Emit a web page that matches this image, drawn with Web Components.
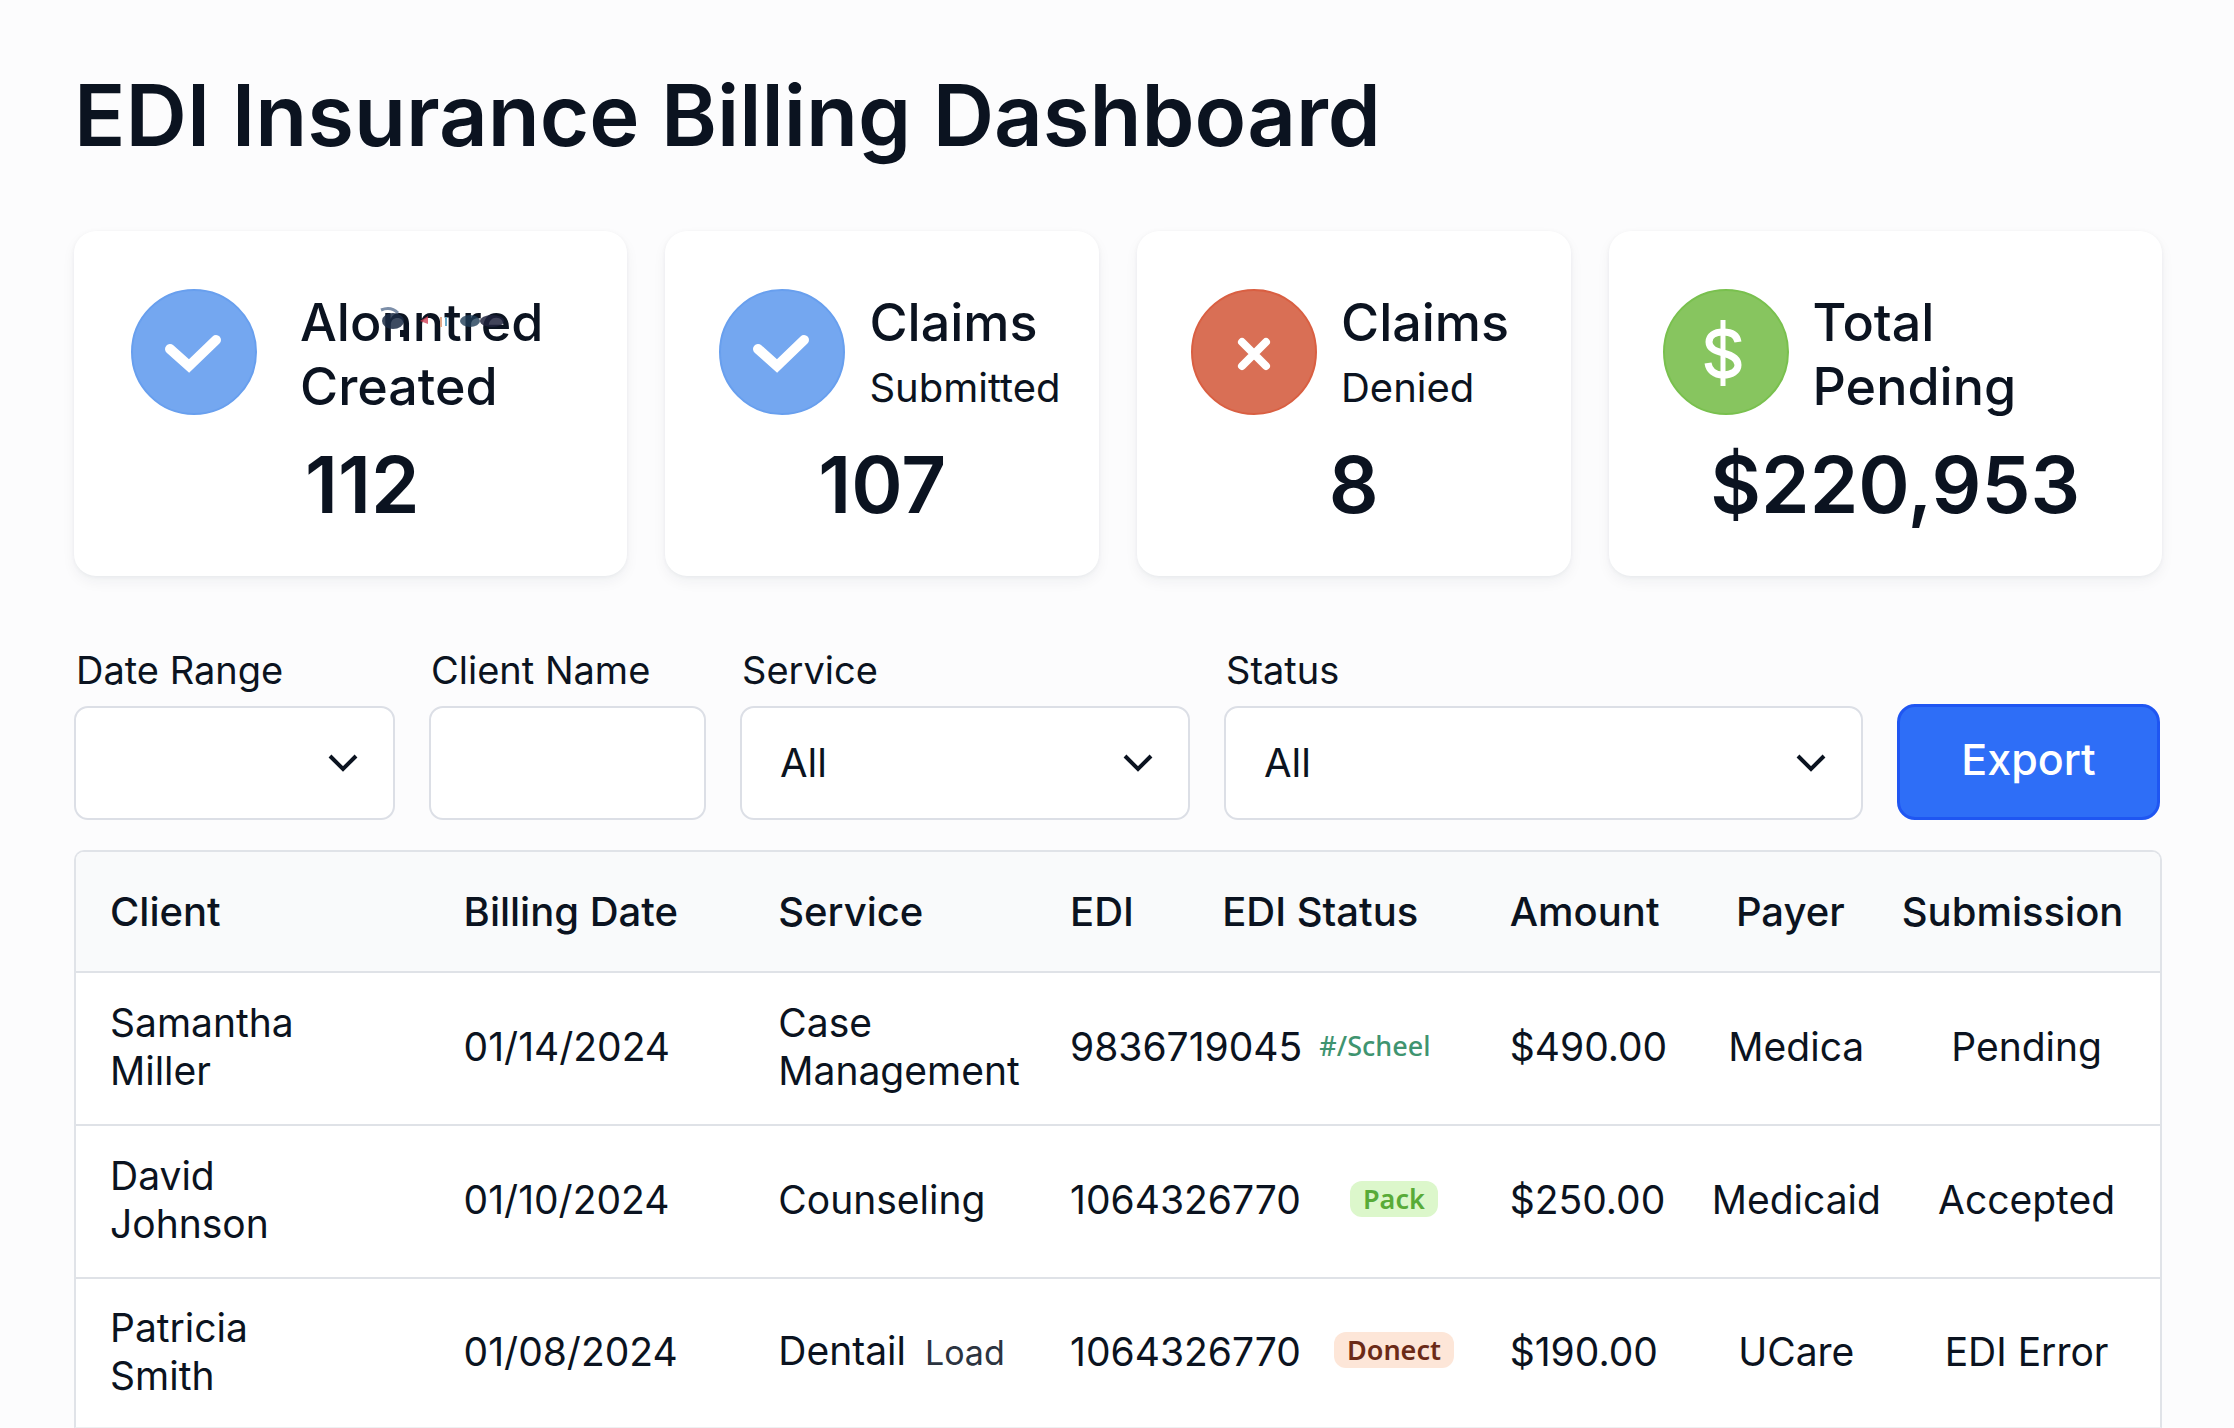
<!DOCTYPE html>
<html lang="en">
<head>
<meta charset="utf-8">
<title>EDI Insurance Billing Dashboard</title>
<style>
  body { margin: 0; background: #fcfcfd; color: #0b1320; font-family: Inter, "Liberation Sans", sans-serif; }
</style>
</head>
<body>
<billing-dashboard>
  <span slot="title">EDI Insurance Billing Dashboard</span>
  <stat-card slot="stats" icon="check" tone="blue" value="112" wide smudge><span>Alonntred</span><span>Created</span></stat-card>
  <stat-card slot="stats" icon="check" tone="blue" value="107"><span>Claims</span><span slot="sub">Submitted</span></stat-card>
  <stat-card slot="stats" icon="cross" tone="red" value="8"><span>Claims</span><span slot="sub">Denied</span></stat-card>
  <stat-card slot="stats" icon="dollar" tone="green" value="$220,953" shifted><span>Total</span><span>Pending</span></stat-card>
  <filter-field slot="filters" label="Date Range" type="select"></filter-field>
  <filter-field slot="filters" label="Client Name" type="text"></filter-field>
  <filter-field slot="filters" label="Service" type="select" value="All"></filter-field>
  <filter-field slot="filters" label="Status" type="select" value="All"></filter-field>
  <export-button slot="filters">Export</export-button>
  <claims-table></claims-table>
</billing-dashboard>
<script>
class Base extends HTMLElement {
  connectedCallback() {
    if (!this.shadowRoot) this.attachShadow({ mode: 'open' }).innerHTML = this.render();
  }
}

customElements.define('billing-dashboard', class extends Base {
  render() {
    return `<style>
      :host { display: block; padding: 62px 72px 0 74px; }
      h1 { margin: 0 0 61px; font-size: 85px; line-height: 108px; font-weight: 600; white-space: nowrap; }
      .stats { display: grid; grid-template-columns: 554fr 434fr 434fr 554fr; gap: 38px; margin-bottom: 70px; }
      .filters { display: grid; grid-template-columns: 321fr 277fr 450fr 639fr 263fr; gap: 34px; align-items: end; margin: 0 2px 30px 0; }
    </style>
    <h1><slot name="title"></slot></h1>
    <section class="stats"><slot name="stats"></slot></section>
    <form class="filters"><slot name="filters"></slot></form>
    <slot></slot>`;
  }
});

const ICONS = {
  check: '<path d="M39 60 L58 77 L85 51" fill="none" stroke="#fff" stroke-width="10" stroke-linecap="round"/>',
  cross: '<path d="M51 53 L75 77 M75 53 L51 77" fill="none" stroke="#fff" stroke-width="8" stroke-linecap="round"/>',
  dollar: '<path d="M75 53 C74 46 68 43 60 43 C51 43 46 47 46 53 C46 60 53 62 60 64 C68 66 75 69 75 76 C75 82 69 86 60 86 C51 86 46 81 45 74" fill="none" stroke="#fff" stroke-width="7"/><path d="M60 31 V97" stroke="#fff" stroke-width="5"/>'
};
const TONES = { blue: ['#74a7f0', '#689fee'], red: ['#d96f55', '#d95f42'], green: ['#87c55f', '#79c04e'] };

customElements.define('stat-card', class extends Base {
  render() {
    const [fill, ring] = TONES[this.getAttribute('tone')];
    return `<style>
      :host { display: block; box-sizing: border-box; min-width: 0; padding: 58px 0 43px 54px; background: #fff; border-radius: 22px;
        box-shadow: 0 6px 14px rgba(20, 30, 50, .05), 0 1px 4px rgba(20, 30, 50, .05); }
      :host([wide]) { padding-left: 57px; }
      .head { display: flex; gap: 24px; min-height: 132px; margin-bottom: 16px; }
      :host([wide]) .head { gap: 43px; }
      .icon { flex: none; width: 126px; height: 126px; }
      .text { position: relative; padding-top: 2px; font-size: 52px; line-height: 64px; font-weight: 500; white-space: nowrap; }
      ::slotted(span) { display: block; }
      .sub { font-size: 40px; line-height: 66px; font-weight: 400; }
      .value { margin-left: -54px; text-align: center; font-size: 78px; line-height: 96px; font-weight: 600; }
      :host([wide]) .value, :host([shifted]) .value { margin-left: -34px; }
      .smudge { position: absolute; left: 79px; top: 18px; width: 130px; height: 38px; }
    </style>
    <div class="head">
      <svg class="icon" viewBox="0 0 126 126" aria-hidden="true"><circle cx="63" cy="63" r="62" fill="${fill}" stroke="${ring}" stroke-width="2"/>${ICONS[this.getAttribute('icon')]}</svg>
      <div class="text"><slot></slot><div class="sub"><slot name="sub"></slot></div>
      ${this.hasAttribute('smudge') ? `<svg class="smudge" viewBox="0 0 130 38" aria-hidden="true">
        <path d="M2 3 Q12 -1 19 6" fill="none" stroke="#7c8ea8" stroke-width="3"/>
        <ellipse cx="14" cy="14" rx="11" ry="8" fill="#1b2c45" opacity=".85"/>
        <rect x="21" y="23" width="7" height="7" fill="#0b1320"/>
        <path d="M41 14 l8 -5 v8 z" fill="#cf4055" opacity=".8"/>
        <path d="M62 10 v10" stroke="#e2a98a" stroke-width="2"/><path d="M67 10 v9" stroke="#69aac9" stroke-width="2"/>
        <ellipse cx="91" cy="14" rx="10" ry="6" fill="#1f3d58" opacity=".8"/>
        <ellipse cx="113" cy="14" rx="12" ry="6" fill="#20233d" opacity=".85"/>
      </svg>` : ''}</div>
    </div>
    <div class="value">${this.getAttribute('value')}</div>`;
  }
});

customElements.define('filter-field', class extends Base {
  render() {
    const value = this.getAttribute('value') || '';
    const control = this.getAttribute('type') === 'select'
      ? `<select id="control"><option>${value}</option></select>
         <svg viewBox="0 0 30 18" aria-hidden="true"><path d="M2 2 L15 15 L28 2" fill="none" stroke="#0b1320" stroke-width="4"/></svg>`
      : `<input id="control" type="text">`;
    return `<style>
      :host { display: block; min-width: 0; }
      label { display: block; margin: 0 0 12px 2px; font-size: 38px; line-height: 48px; white-space: nowrap; }
      .box { display: grid; align-items: center; }
      select, input { grid-area: 1 / 1; appearance: none; box-sizing: border-box; width: 100%; height: 114px; margin: 0; padding: 0 38px;
        border: 2px solid #dcdfe6; border-radius: 14px; background: #fff; color: inherit; font: 400 40px/48px Inter, "Liberation Sans", sans-serif; }
      svg { grid-area: 1 / 1; justify-self: end; width: 30px; height: 18px; margin-right: 37px; pointer-events: none; }
    </style>
    <label for="control">${this.getAttribute('label')}</label>
    <div class="box">${control}</div>`;
  }
});

customElements.define('export-button', class extends Base {
  render() {
    return `<style>
      :host { display: block; min-width: 0; }
      button { display: block; box-sizing: border-box; width: 100%; height: 116px; padding: 0 0 6px; border: 3px solid #1f56f2; border-radius: 18px;
        background: #2e6ef7; color: #fff; font: 500 43px/50px Inter, "Liberation Sans", sans-serif; }
    </style><button type="button"><slot></slot></button>`;
  }
});

customElements.define('status-badge', class extends Base {
  render() {
    return `<style>
      :host { display: inline-block; padding: 0 13px; border-radius: 12px; font: 600 27px/36px "Noto Sans", "Open Sans", sans-serif; }
      :host([tone="green"]) { background: #dcf7cb; color: #58ab38; }
      :host([tone="orange"]) { background: #fde6d8; color: #6b2a17; }
      :host([tone="plain"]) { padding: 0 38px 0 0; color: #3f9470; font-weight: 500; }
    </style><slot></slot>`;
  }
});

const CLAIMS = [
  ['Samantha<br>Miller', '01/14/2024', 'Case<br>Management', '9836719045', 'plain', '#/Scheel', '$490.00', 'Medica', 'Pending'],
  ['David<br>Johnson', '01/10/2024', 'Counseling', '1064326770', 'green', 'Pack', '$250.00', 'Medicaid', 'Accepted'],
  ['Patricia<br>Smith', '01/08/2024', 'Dentail <small>Load</small>', '1064326770', 'orange', 'Donect', '$190.00', 'UCare', 'EDI Error']
];

customElements.define('claims-table', class extends Base {
  render() {
    const rows = CLAIMS.map(([client, date, service, edi, tone, badge, amount, payer, submission]) => `<tr>
      <td>${client}</td><td>${date}</td><td>${service}</td><td>${edi}</td>
      <td class="status"><status-badge tone="${tone}">${badge}</status-badge></td>
      <td>${amount}</td><td class="mid">${payer}</td><td class="mid">${submission}</td></tr>`).join('');
    return `<style>
      :host { display: block; border: 2px solid #e0e3e8; border-radius: 10px 10px 0 0; border-bottom: 1px solid #eef0f2; background: #fff; overflow: hidden; }
      table { width: 100%; table-layout: fixed; border-collapse: collapse; line-height: 48px; }
      th, td { padding: 0; text-align: left; white-space: nowrap; vertical-align: middle; }
      th { height: 119px; background: #f9fafb; font-size: 40px; font-weight: 500; }
      td { height: 148px; padding-bottom: 3px; font-size: 39px; }
      tbody tr { border-top: 2px solid #dfe2e7; }
      tbody tr:last-child td { height: 145px; }
      th:first-child, td:first-child { padding-left: 34px; }
      .mid { text-align: center; }
      th.mid { padding-right: 12px; }
      th.mid:last-child { padding-right: 28px; }
      td.status { padding: 0 0 12px 56px; text-align: center; }
      tbody tr td.status, tbody tr:last-child td.status { height: 136px; }
      status-badge { vertical-align: middle; }
      small { margin-left: 8px; font-size: 34px; color: #2c3440; }
    </style>
    <table>
      <colgroup><col style="width:18.6%"><col style="width:15.1%"><col style="width:14%"><col style="width:7.3%"><col style="width:13.8%"><col style="width:9.1%"><col style="width:9.3%"><col></colgroup>
      <thead><tr><th>Client</th><th>Billing Date</th><th>Service</th><th>EDI</th><th>EDI Status</th><th>Amount</th><th class="mid">Payer</th><th class="mid">Submission</th></tr></thead>
      <tbody>${rows}</tbody>
    </table>`;
  }
});
</script>
</body>
</html>
